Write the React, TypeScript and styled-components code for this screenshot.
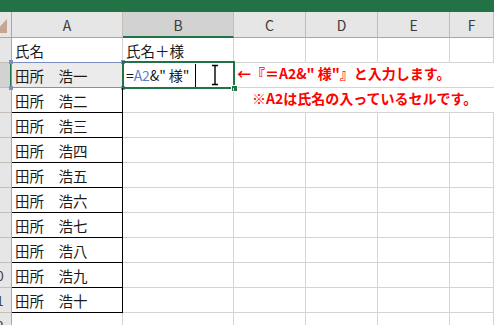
import React from "react"
import styled, { createGlobalStyle } from "styled-components"

const GlobalStyle = createGlobalStyle`
  html, body {
    margin: 0;
    padding: 0;
    background: #ffffff;
    overflow: hidden;
  }
  body {
    font-family: "Noto Sans CJK JP", "Noto Sans", sans-serif;
  }
`

const GREEN = "#217346"
const GRID = "#d4d4d4"
const HEAD_LINE = "#9ea7bf"
const HEAD_SEP = "#c6bdb5"
const REF_BLUE = "#7b8ec6"

const Page = styled.div`
  width: 494px;
  height: 325px;
  overflow: hidden;
`

const TitleBar = styled.div`
  height: 12px;
  background: ${GREEN};
`

const Sheet = styled.div`
  display: grid;
  grid-template-columns: 12px 111px 111px 72px 72px 72px 1fr;
  grid-template-rows: 26px;
  grid-auto-rows: 25px;
`

const Corner = styled.div`
  box-sizing: border-box;
  background: #e6e6e6;
  border-right: 1px solid ${HEAD_LINE};
  border-bottom: 1px solid ${HEAD_LINE};
  overflow: hidden;
  display: flex;
  align-items: flex-end;
  padding-bottom: 4px;
`

const ColHead = styled.div<{ $selected?: boolean }>`
  box-sizing: border-box;
  display: flex;
  align-items: center;
  justify-content: center;
  background: ${(p) => (p.$selected ? "#d2d2d2" : "#e6e6e6")};
  border-right: 1px solid ${HEAD_SEP};
  border-bottom: ${(p) => (p.$selected ? `2px solid ${GREEN}` : `1px solid ${HEAD_LINE}`)};
  padding-top: ${(p) => (p.$selected ? "1px" : "0")};
  font-size: 14px;
  color: #3c3c3c;
`

const RowHead = styled.div<{ $selected?: boolean }>`
  box-sizing: border-box;
  display: flex;
  align-items: center;
  overflow: hidden;
  background: ${(p) => (p.$selected ? "#d2d2d2" : "#e6e6e6")};
  border-right: ${(p) => (p.$selected ? `2px solid ${GREEN}` : `1px solid ${HEAD_LINE}`)};
  border-bottom: 1px solid ${HEAD_SEP};
  font-size: 14px;
  color: #444;
`

const RowNum = styled.span`
  flex: none;
  width: 26px;
  margin-left: -17px;
  text-align: center;
`

const Cell = styled.div<{ $boxed?: boolean; $shade?: boolean }>`
  position: relative;
  box-sizing: border-box;
  display: flex;
  align-items: center;
  padding-left: 3px;
  white-space: nowrap;
  font-size: 14.5px;
  color: #1a1a1a;
  background: ${(p) => (p.$shade ? "#ebebeb" : "transparent")};
  border-right: 1px solid ${(p) => (p.$boxed ? "#000" : GRID)};
  border-bottom: 1px solid ${(p) => (p.$boxed ? "#000" : GRID)};
`

const NoteCell = styled.div<{ $indent: number }>`
  grid-column: span 4;
  box-sizing: border-box;
  display: flex;
  align-items: center;
  padding: 0 0 4px ${(p) => p.$indent}px;
  white-space: nowrap;
  overflow: hidden;
  border-bottom: 1px solid ${GRID};
  font-size: 14px;
  font-weight: 700;
  color: #ff0000;
`

const RefBox = styled.div`
  position: absolute;
  left: -1px;
  top: -1px;
  right: -1px;
  bottom: -1px;
  border: 1px solid ${REF_BLUE};
  pointer-events: none;
`

const Handle = styled.span<{ $x: "left" | "right"; $y: "top" | "bottom" }>`
  position: absolute;
  width: 4px;
  height: 4px;
  background: ${REF_BLUE};
  ${(p) => p.$x}: -3px;
  ${(p) => p.$y}: -3px;
`

const Selection = styled.div`
  position: absolute;
  left: -1px;
  top: -2px;
  right: -2px;
  bottom: -2px;
  border: 2px solid ${GREEN};
  pointer-events: none;
`

const FillHandle = styled.span`
  position: absolute;
  right: -5px;
  bottom: -5px;
  width: 5px;
  height: 5px;
  background: ${GREEN};
  border: 1px solid #fff;
`

const Formula = styled.span`
  font-size: 14px;
  letter-spacing: -0.1px;
`

const RefText = styled.span`
  color: #5b7fcf;
`

const Caret = styled.span`
  align-self: stretch;
  flex: none;
  width: 1px;
  margin: 1px 0 0 6px;
  background: #000;
`

const MouseBeam = styled.svg`
  flex: none;
  margin: -1px 0 0 15px;
`

const cols = ["A", "B", "C", "D", "E", "F"]
const names = ["一", "二", "三", "四", "五", "六", "七", "八", "九", "十"].map((n) => `田所　浩${n}`)

const notes: Record<number, { text: string; indent: number }> = {
  2: { text: "←『＝A2&\" 様\"』と入力します。", indent: 3 },
  3: { text: "※A2は氏名の入っているセルです。", indent: 18 },
}

export default function App() {
  const rows = Array.from({ length: 12 }, (_, i) => i + 1)

  return (
    <Page>
      <GlobalStyle />
      <TitleBar />
      <Sheet>
        <Corner>
          <svg width="11" height="14" viewBox="0 0 11 14">
            <polygon points="7,0 7,14 -6,14" fill="#c4a692" />
          </svg>
        </Corner>
        {cols.map((c) => (
          <ColHead key={c} $selected={c === "B"}>{c}</ColHead>
        ))}

        {rows.map((r) => {
          const name = r === 1 ? "氏名" : names[r - 2] ?? ""
          const boxed = r >= 2 && r <= 11
          const note = notes[r]
          return (
            <React.Fragment key={r}>
              <RowHead $selected={r === 2}>
                <RowNum>{r}</RowNum>
              </RowHead>

              <Cell $boxed={boxed} $shade={r === 2}>
                {name}
                {r === 2 && (
                  <RefBox>
                    <Handle $x="left" $y="top" />
                    <Handle $x="right" $y="top" />
                    <Handle $x="left" $y="bottom" />
                    <Handle $x="right" $y="bottom" />
                  </RefBox>
                )}
              </Cell>

              <Cell>
                {r === 1 && "氏名＋様"}
                {r === 2 && (
                  <>
                    <Formula>
                      =<RefText>A2</RefText>&amp;" 様"
                    </Formula>
                    <Caret />
                    <MouseBeam width="8" height="22" viewBox="0 0 8 22">
                      <path d="M1 1.5h6M1 20.5h6M4 1.5v19" stroke="#000" strokeWidth="1.4" fill="none" />
                    </MouseBeam>
                    <Selection>
                      <FillHandle />
                    </Selection>
                  </>
                )}
              </Cell>

              {note ? (
                <NoteCell $indent={note.indent}>{note.text}</NoteCell>
              ) : (
                <>
                  <Cell />
                  <Cell />
                  <Cell />
                  <Cell />
                </>
              )}
            </React.Fragment>
          )
        })}
      </Sheet>
    </Page>
  )
}
